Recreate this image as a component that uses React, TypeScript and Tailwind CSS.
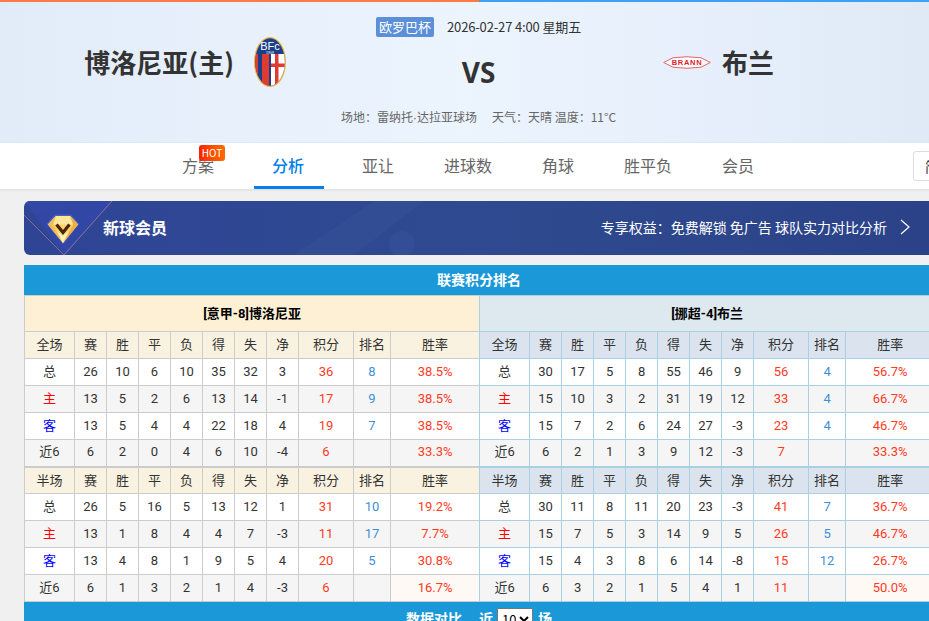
import React from "react";

type Row = (string | number)[];
const fullA: Row[] = [
  ["总", 26, 10, 6, 10, 35, 32, 3, 36, 8, "38.5%"],
  ["主", 13, 5, 2, 6, 13, 14, -1, 17, 9, "38.5%"],
  ["客", 13, 5, 4, 4, 22, 18, 4, 19, 7, "38.5%"],
  ["近6", 6, 2, 0, 4, 6, 10, -4, 6, "", "33.3%"],
];
const halfA: Row[] = [
  ["总", 26, 5, 16, 5, 13, 12, 1, 31, 10, "19.2%"],
  ["主", 13, 1, 8, 4, 4, 7, -3, 11, 17, "7.7%"],
  ["客", 13, 4, 8, 1, 9, 5, 4, 20, 5, "30.8%"],
  ["近6", 6, 1, 3, 2, 1, 4, -3, 6, "", "16.7%"],
];
const fullB: Row[] = [
  ["总", 30, 17, 5, 8, 55, 46, 9, 56, 4, "56.7%"],
  ["主", 15, 10, 3, 2, 31, 19, 12, 33, 4, "66.7%"],
  ["客", 15, 7, 2, 6, 24, 27, -3, 23, 4, "46.7%"],
  ["近6", 6, 2, 1, 3, 9, 12, -3, 7, "", "33.3%"],
];
const halfB: Row[] = [
  ["总", 30, 11, 8, 11, 20, 23, -3, 41, 7, "36.7%"],
  ["主", 15, 7, 5, 3, 14, 9, 5, 26, 5, "46.7%"],
  ["客", 15, 4, 3, 8, 6, 14, -8, 15, 12, "26.7%"],
  ["近6", 6, 3, 2, 1, 5, 4, 1, 11, "", "50.0%"],
];
const heads = ["赛", "胜", "平", "负", "得", "失", "净", "积分", "排名", "胜率"];
const widths = ["w-[50px]", "w-[32px]", "w-[32px]", "w-[32px]", "w-[32px]", "w-[32px]", "w-[32px]", "w-[32px]", "w-[55px]", "w-[37px]"];

function cellColor(i: number, label: string) {
  if (i === 0) return label === "主" ? "text-[#ff0000]" : label === "客" ? "text-[#0000ff]" : "text-[#333333]";
  if (i === 8 || i === 10) return "text-[#ff3b1f]";
  if (i === 9) return "text-[#3f8fd8]";
  return "text-[#333333]";
}

function Body({ rows, line, half }: { rows: Row[]; line: string; half: boolean }) {
  return (
    <>
      {rows.map((r, ri) => (
        <tr key={ri} className={ri % 2 === 0 ? "h-[27px] bg-white" : "h-[27px] bg-[#f5f5f5]"}>
          {r.map((v, i) => (
            <td
              key={i}
              className={`${line} border p-0 text-center ${half ? "pb-[1px]" : "pb-[2px]"} ${cellColor(i, String(r[0]))} ${
                half && ri === 3 && i === 10 ? "bg-[#fff9f5]" : ""
              }`}
            >
              {v}
            </td>
          ))}
        </tr>
      ))}
    </>
  );
}

function Side({
  title, full, half, line, titleBg, headBg,
}: {
  title: string; full: Row[]; half: Row[]; line: string; titleBg: string; headBg: string;
}) {
  return (
    <table
      className="w-[455px] table-fixed border-collapse text-[13px] leading-none"
      style={{ fontFamily: '"Roboto", "Noto Sans CJK SC", sans-serif' }}
    >
      <colgroup>
        {widths.map((w, i) => (
          <col key={i} className={w} />
        ))}
        <col className="w-[89px]" />
      </colgroup>
      <tbody>
        <tr className={`h-[36px] ${titleBg}`}>
          <td colSpan={11} className={`${line} border p-0 text-center font-bold text-black`}>{title}</td>
        </tr>
        <tr className={`h-[27px] ${headBg}`}>
          <td className={`${line} border p-0 pb-[1px] text-center text-[#333333]`}>全场</td>
          {heads.map((h) => (
            <td key={h} className={`${line} border p-0 pb-[1px] text-center text-[#333333]`}>{h}</td>
          ))}
        </tr>
        <Body rows={full} line={line} half={false} />
        <tr className={`h-[27px] ${headBg}`}>
          <td className={`${line} border border-t-2 p-0 text-center text-[#333333]`}>半场</td>
          {heads.map((h) => (
            <td key={h} className={`${line} border border-t-2 p-0 text-center text-[#333333]`}>{h}</td>
          ))}
        </tr>
        <Body rows={half} line={line} half />
      </tbody>
    </table>
  );
}

function BolognaLogo() {
  return (
    <svg width="32" height="50" viewBox="0 0 32 50">
      <defs>
        <clipPath id="o"><ellipse cx="16" cy="25" rx="14.8" ry="23.8" /></clipPath>
      </defs>
      <ellipse cx="16" cy="25" rx="16" ry="25" fill="#e8b23a" />
      <g clipPath="url(#o)">
        <rect width="32" height="50" fill="#1c3f8c" />
        <rect x="1" y="17" width="3" height="33" fill="#df3b33" />
        <rect x="8" y="17" width="7" height="33" fill="#df3b33" />
        <rect x="17" y="17" width="15" height="33" fill="#ffffff" />
        <rect x="21" y="17" width="3.5" height="33" fill="#df3b33" />
        <rect x="17" y="26.5" width="15" height="3.5" fill="#df3b33" />
      </g>
      <text x="16" y="12.5" textAnchor="middle" fontSize="11" fontFamily="Liberation Sans, sans-serif" fill="#fff">BFc</text>
      <text x="16" y="16.5" textAnchor="middle" fontSize="3.5" fontFamily="Liberation Sans, sans-serif" fill="#fff">1909</text>
    </svg>
  );
}

function BrannLogo() {
  return (
    <svg width="48" height="13" viewBox="0 0 48 13">
      <path d="M0.7 6.5 L10 1.8 Q24 -0.3 38 1.8 L47.3 6.5 L38 11.2 Q24 13.3 10 11.2 Z" fill="#ffffff" stroke="#e8505a" strokeWidth="0.9" />
      <text x="24" y="9.4" textAnchor="middle" fontSize="7.5" fontWeight="700" letterSpacing="0.7" fontFamily="Liberation Sans, sans-serif" fill="#d81f2d">BRANN</text>
    </svg>
  );
}

function Diamond() {
  return (
    <svg width="34" height="31" viewBox="0 0 34 31">
      <path d="M9 0.5 H25 L33.5 10 L17 30.5 L0.5 10 Z" fill="#4a5fb8" />
      <path d="M10 2 H24 L32 10.5 L17 29 L2 10.5 Z" fill="#fbd46a" />
      <path d="M10 2 H24 L32 10.5 H2 Z" fill="#fde79a" />
      <path d="M10 2 L7 10.5 L17 29 L2 10.5 Z" fill="#f5bd4e" />
      <path d="M24 2 L27 10.5 L17 29 L32 10.5 Z" fill="#f0b040" />
      <path d="M17 29 L11 17 L17 22 L23 17 Z" fill="#fff1bd" />
      <path d="M10.5 10.5 L17 18.5 L23.5 10.5" fill="none" stroke="#4a2410" strokeWidth="3.2" />
    </svg>
  );
}

const navItems = ["方案", "分析", "亚让", "进球数", "角球", "胜平负", "会员"];

export default function App() {
  return (
    <div
      className="h-[621px] w-[929px] overflow-hidden bg-[#f0f0f0] text-[#333333]"
      style={{ fontFamily: '"Noto Sans CJK SC", "Open Sans", sans-serif' }}
    >
      <div className="flex h-[2px]">
        <div className="w-[479px] bg-[#ff7a45]" />
        <div className="flex-1 bg-[#40a0f5]" />
      </div>
      <header className="flex h-[141px] border-b border-[#d6e8fc] bg-gradient-to-r from-[#e2ecf8] via-[#ecf4fe] to-[#e0eaf7]">
        <div className="flex h-[120px] w-[286px] items-center justify-end gap-[20px]">
          <span className="text-[26px] font-bold leading-none">博洛尼亚(主)</span>
          <BolognaLogo />
        </div>
        <div className="flex w-[377px] flex-col items-center pl-2 pt-[15px]">
          <div className="flex items-center gap-[13px] text-[13px]">
            <span className="flex h-[20px] w-[58px] items-center justify-center rounded-[2px] bg-[#5b8fd8] text-white">欧罗巴杯</span>
            <span className="tracking-[-0.15px]">2026-02-27 4:00 星期五</span>
          </div>
          <div className="mt-[15px] text-[28px] font-bold leading-[40px]" style={{ fontFamily: '"Open Sans", sans-serif' }}>VS</div>
          <div className="mt-[16px] flex gap-[15px] text-[12px] leading-[18px] text-[#666666]">
            <span>场地：雷纳托<span style={{ fontFamily: '"Liberation Sans", sans-serif' }}>·</span>达拉亚球场</span>
            <span>天气：天晴 温度：11°C</span>
          </div>
        </div>
        <div className="flex h-[120px] items-center gap-[11px]">
          <BrannLogo />
          <span className="text-[26px] font-bold leading-none">布兰</span>
        </div>
      </header>
      <nav className="relative flex h-[48px] items-stretch justify-start border-b-2 border-[#e5e5e5] bg-white pl-[153px] text-[16px] text-[#666666]">
        {navItems.map((t, i) => (
          <div key={t} className="relative flex w-[90px] items-center justify-center pb-[3px]">
            <span className={i === 1 ? "font-medium text-[#0080e8]" : ""}>{t}</span>
            {i === 1 && <span className="absolute bottom-0 left-[11px] h-[3px] w-[70px] bg-[#0080e8]" />}
            {i === 0 && (
              <span className="absolute left-[46px] top-[2px] flex h-[16px] w-[26px] items-center justify-center rounded-[3px] bg-gradient-to-r from-[#ff1a00] to-[#ff6a00] text-[10px] leading-none text-white">HOT</span>
            )}
          </div>
        ))}
        <div className="absolute left-[913px] top-[8px] flex h-[30px] w-[60px] items-center rounded-[3px] border border-[#dddddd] pl-[11px] text-[14px] text-[#333333]">简体</div>
      </nav>
      <main className="ml-[24px] w-[910px] pt-[10px]">
        <div className="relative flex h-[54px] items-center justify-between overflow-hidden rounded-[6px] bg-gradient-to-r from-[#2f4596] via-[#2f4a90] to-[#2b4288] pb-[2px] pl-[79px] pr-[24px] text-white">
          <svg className="absolute left-0 top-0" width="910" height="54" viewBox="0 0 910 54">
            <path d="M0 0 H88 L40 54 Z" fill="#3348a6" />
            <path d="M0 14 L40 54" stroke="#a8708c" strokeWidth="1" opacity="0.8" />
            <path d="M88 0 L40 54" stroke="#b08aa0" strokeWidth="1" opacity="0.7" />
            <path d="M270 54 L350 0 H400 L330 54 Z" fill="#3a5a9a" opacity="0.25" />
            <circle cx="378" cy="43" r="13" fill="#3a55a0" opacity="0.4" />
          </svg>
          <span className="absolute left-[22px] top-[13px]"><Diamond /></span>
          <span className="relative text-[16px] font-bold">新球会员</span>
          <span className="relative flex items-center gap-[13px] text-[14px]">
            专享权益：免费解锁 免广告 球队实力对比分析
            <svg width="10" height="16" viewBox="0 0 10 16" fill="none" stroke="#ffffff" strokeWidth="1.2"><path d="M1 1 L9 8 L1 15" /></svg>
          </span>
        </div>
        <div className="mt-[10px] flex h-[30px] items-center justify-center bg-[#1a98d8] pb-[2px] text-[14px] font-bold text-white">联赛积分排名</div>
        <div className="flex">
          <Side
            title="[意甲-8]博洛尼亚"
            full={fullA}
            half={halfA}
            line="border-[#cccccc]"
            titleBg="bg-[#fdf0d5]"
            headBg="bg-[#faf2e0]"
          />
          <div className="-ml-px">
            <Side
              title="[挪超-4]布兰"
              full={fullB}
              half={halfB}
              line="border-[#a9d0e3]"
              titleBg="bg-[#dde8ef]"
              headBg="bg-[#dbe4ee]"
            />
          </div>
        </div>
        <div className="flex h-[30px] items-start justify-center bg-[#1a98d8] pt-[6px] text-[14px] font-bold text-white">
          <span className="mr-[17px] leading-[20px]">数据对比</span>
          <span className="mr-[4px] leading-[20px]">近</span>
          <select defaultValue="10" className="mr-[5px] h-[22px] w-[36px] rounded-[1px] border border-[#767676] bg-white text-[13px] font-normal text-black">
            <option value="10">10</option>
            <option value="20">20</option>
          </select>
          <span className="leading-[20px]">场</span>
        </div>
      </main>
    </div>
  );
}
